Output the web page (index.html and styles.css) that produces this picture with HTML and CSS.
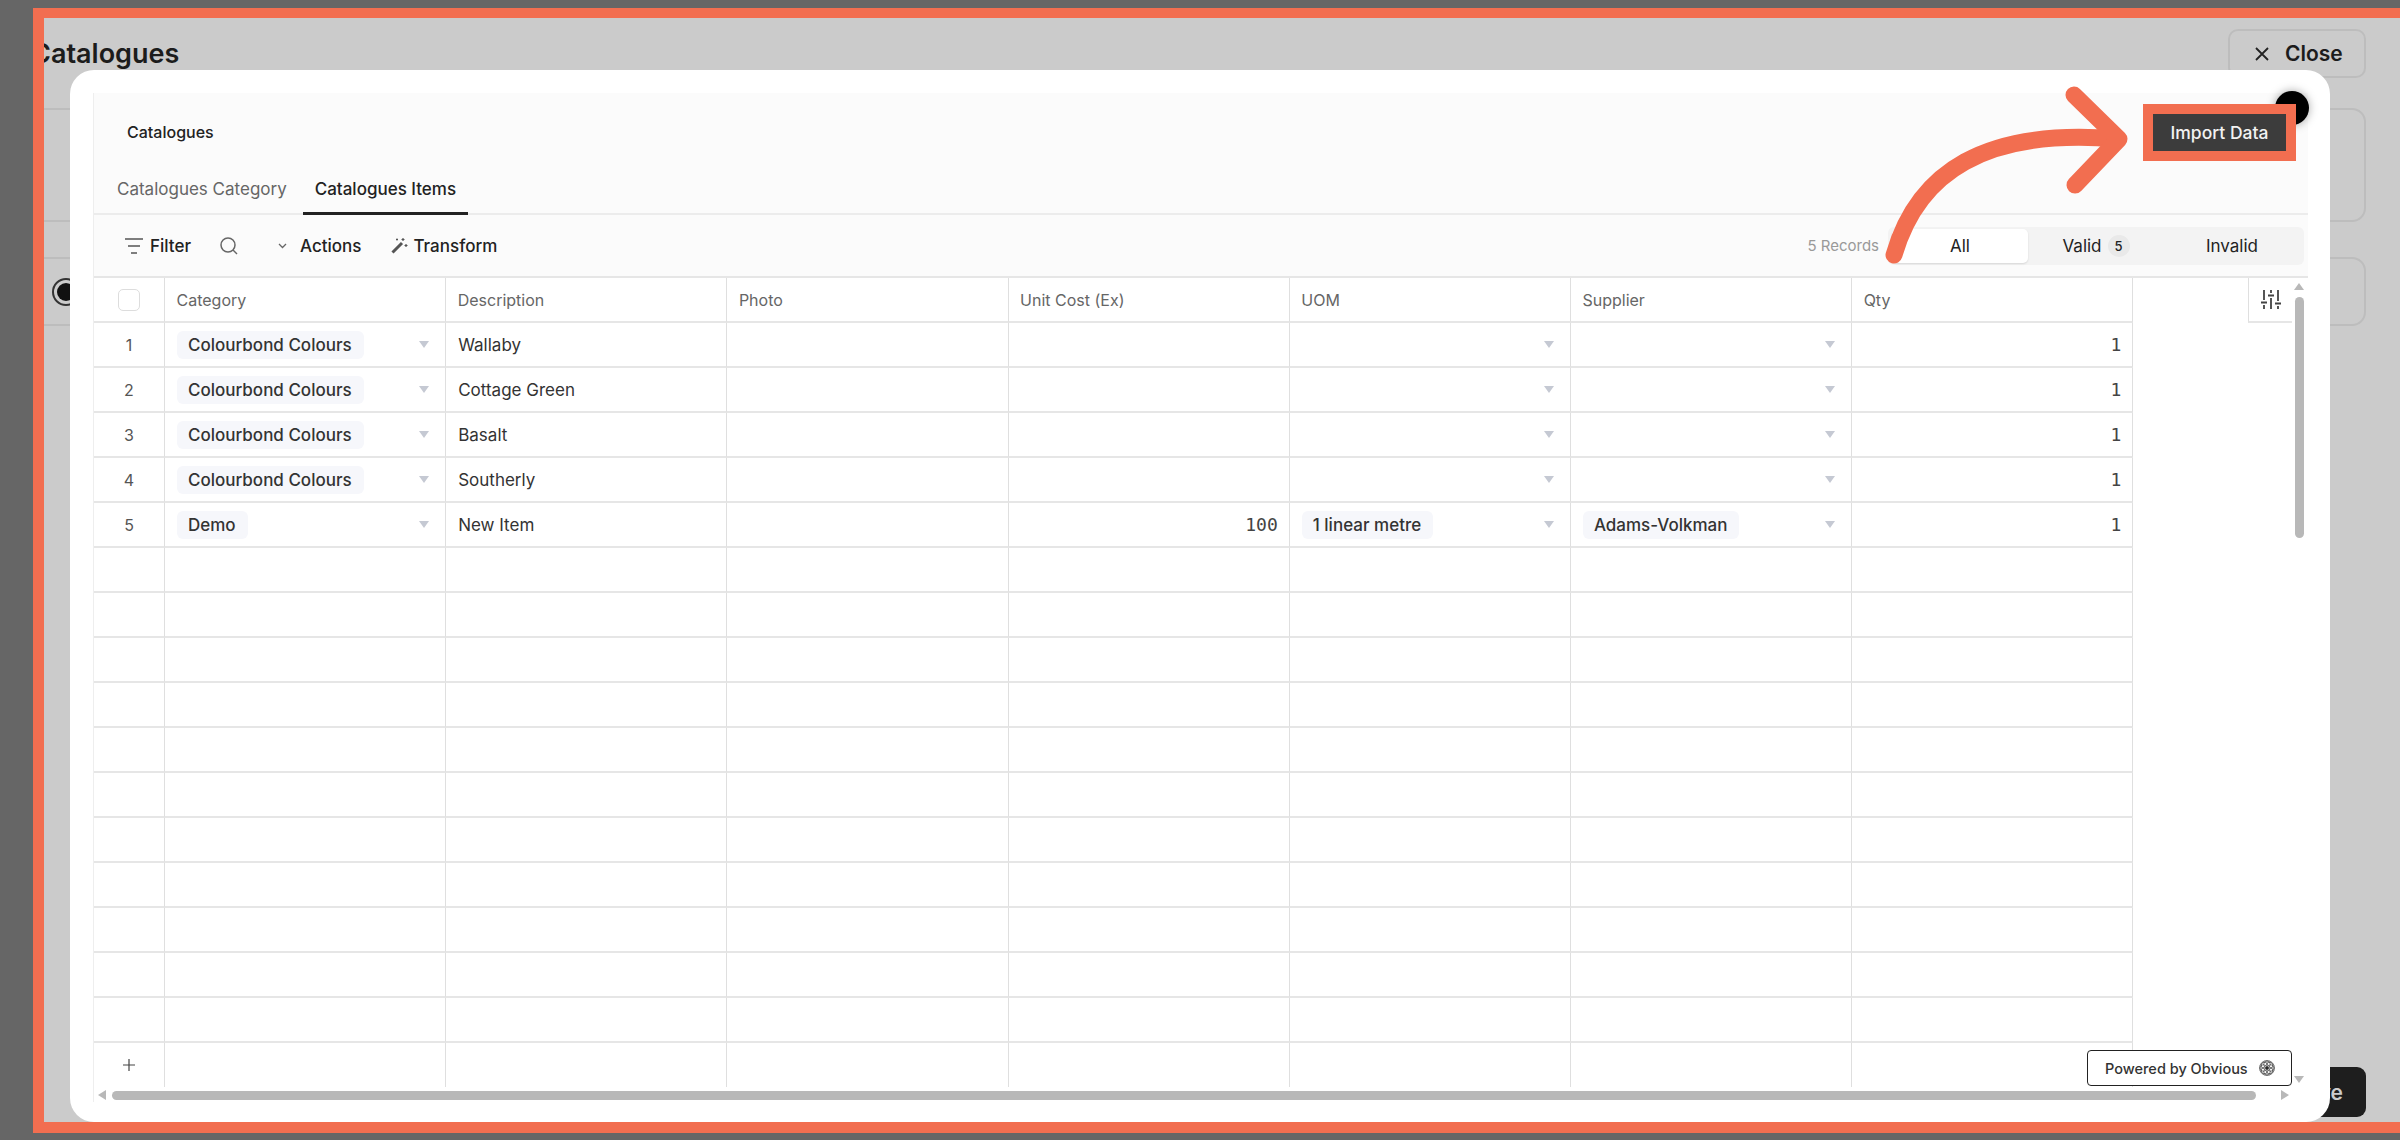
FILE: index.html
```html
<!DOCTYPE html>
<html lang="en">
<head>
<meta charset="utf-8">
<title>Catalogues</title>
<link rel="stylesheet" href="styles.css">
</head>
<body>
<div class="frame">
  <div class="page">
    <header class="page-head">
      <h1 class="page-title">Catalogues</h1>
      <button class="close-btn"><svg class="close-x" viewBox="0 0 14 14"><path d="M1 1l12 12M13 1L1 13"/></svg>Close</button>
    </header>
    <section class="card card-a"></section>
    <section class="card card-b"><span class="radio"></span></section>
    <footer class="page-foot"><button class="save-btn">Save</button></footer>
  </div>

  <div class="modal">
    <span class="modal-close"></span>
    <div class="panel">
      <div class="title-row">
        <span class="sheet-title">Catalogues</span>
        <button class="import-btn">Import Data</button>
      </div>
      <nav class="tabs">
        <span class="tab">Catalogues Category</span>
        <span class="tab tab-on">Catalogues Items</span>
      </nav>
      <div class="toolbar">
        <div class="tools">
          <span class="tool tool-filter"><svg class="ic-filter" viewBox="0 0 18 16"><path d="M0 1h18M3 8h12M6 15h6"/></svg>Filter</span>
          <svg class="ic-search" viewBox="0 0 18 18"><circle cx="8" cy="8" r="7"/><path d="M13 13l4 4"/></svg>
          <span class="tool tool-actions"><svg class="ic-chev" viewBox="0 0 9 6"><path d="M1 1l3.5 3.5L8 1"/></svg>Actions</span>
          <span class="tool tool-transform"><svg class="ic-wand" viewBox="0 0 17 17"><path class="wand-stick" d="M1.5 15.5L11 6"/><path class="wand-spark" d="M12 1v3M10.5 2.500h3M15 7v3M13.500 8.500h3M6 1.500v2M5 2.500h2"/></svg>Transform</span>
        </div>
        <div class="filters">
          <span class="records">5 Records</span>
          <div class="segments">
            <span class="seg seg-on">All</span>
            <span class="seg">Valid<b class="seg-count">5</b></span>
            <span class="seg">Invalid</span>
          </div>
        </div>
      </div>
      <div class="table-area">
        <div class="sheet">
          <div class="c c-num"><span class="check"></span></div><div class="c c-h">Category</div><div class="c c-h">Description</div><div class="c c-h">Photo</div><div class="c c-h">Unit Cost (Ex)</div><div class="c c-h">UOM</div><div class="c c-h">Supplier</div><div class="c c-h">Qty</div>

          <div class="c c-num">1</div><div class="c sel"><span class="chip">Colourbond Colours</span></div><div class="c">Wallaby</div><div class="c"></div><div class="c"></div><div class="c sel"></div><div class="c sel"></div><div class="c c-mono">1</div>
          <div class="c c-num">2</div><div class="c sel"><span class="chip">Colourbond Colours</span></div><div class="c">Cottage Green</div><div class="c"></div><div class="c"></div><div class="c sel"></div><div class="c sel"></div><div class="c c-mono">1</div>
          <div class="c c-num">3</div><div class="c sel"><span class="chip">Colourbond Colours</span></div><div class="c">Basalt</div><div class="c"></div><div class="c"></div><div class="c sel"></div><div class="c sel"></div><div class="c c-mono">1</div>
          <div class="c c-num">4</div><div class="c sel"><span class="chip">Colourbond Colours</span></div><div class="c">Southerly</div><div class="c"></div><div class="c"></div><div class="c sel"></div><div class="c sel"></div><div class="c c-mono">1</div>
          <div class="c c-num">5</div><div class="c sel"><span class="chip">Demo</span></div><div class="c">New Item</div><div class="c"></div><div class="c c-mono">100</div><div class="c sel"><span class="chip">1 linear metre</span></div><div class="c sel"><span class="chip">Adams-Volkman</span></div><div class="c c-mono">1</div>

          <div class="c c-num"></div><div class="c"></div><div class="c"></div><div class="c"></div><div class="c"></div><div class="c"></div><div class="c"></div><div class="c"></div>
          <div class="c c-num"></div><div class="c"></div><div class="c"></div><div class="c"></div><div class="c"></div><div class="c"></div><div class="c"></div><div class="c"></div>
          <div class="c c-num"></div><div class="c"></div><div class="c"></div><div class="c"></div><div class="c"></div><div class="c"></div><div class="c"></div><div class="c"></div>
          <div class="c c-num"></div><div class="c"></div><div class="c"></div><div class="c"></div><div class="c"></div><div class="c"></div><div class="c"></div><div class="c"></div>
          <div class="c c-num"></div><div class="c"></div><div class="c"></div><div class="c"></div><div class="c"></div><div class="c"></div><div class="c"></div><div class="c"></div>
          <div class="c c-num"></div><div class="c"></div><div class="c"></div><div class="c"></div><div class="c"></div><div class="c"></div><div class="c"></div><div class="c"></div>
          <div class="c c-num"></div><div class="c"></div><div class="c"></div><div class="c"></div><div class="c"></div><div class="c"></div><div class="c"></div><div class="c"></div>
          <div class="c c-num"></div><div class="c"></div><div class="c"></div><div class="c"></div><div class="c"></div><div class="c"></div><div class="c"></div><div class="c"></div>
          <div class="c c-num"></div><div class="c"></div><div class="c"></div><div class="c"></div><div class="c"></div><div class="c"></div><div class="c"></div><div class="c"></div>
          <div class="c c-num"></div><div class="c"></div><div class="c"></div><div class="c"></div><div class="c"></div><div class="c"></div><div class="c"></div><div class="c"></div>
          <div class="c c-num"></div><div class="c"></div><div class="c"></div><div class="c"></div><div class="c"></div><div class="c"></div><div class="c"></div><div class="c"></div>

          <div class="c c-num c-last"><svg class="ic-plus" viewBox="0 0 12 12"><path d="M6 0v12M0 6h12"/></svg></div><div class="c c-last"></div><div class="c c-last"></div><div class="c c-last"></div><div class="c c-last"></div><div class="c c-last"></div><div class="c c-last"></div><div class="c c-last"></div>
        </div>
        <aside class="side">
          <div class="settings">
            <svg class="ic-sliders" viewBox="0 0 20 19"><path d="M3 0v10M3 15v4M10 0v3M10 8v11M17 0v11M17 16v3"/><path d="M0 12.500h6M7 5.500h6M14 13.500h6"/></svg>
          </div>
          <div class="vscroll">
            <span class="tri tri-up"></span>
            <span class="vthumb"></span>
            <span class="tri tri-down"></span>
          </div>
        </aside>
      </div>
      <div class="hscroll">
        <span class="tri tri-left"></span>
        <span class="hthumb"></span>
        <span class="tri tri-right"></span>
      </div>
    </div>
    <div class="powered">Powered by Obvious
      <svg class="ic-obvious" viewBox="0 0 16 16"><circle cx="8" cy="8" r="7.500"/><circle cx="8" cy="4.400" r="3.300"/><circle cx="8" cy="11.600" r="3.300"/><circle cx="4.400" cy="8" r="3.300"/><circle cx="11.600" cy="8" r="3.300"/><circle cx="5.500" cy="5.500" r="3.300"/><circle cx="10.500" cy="5.500" r="3.300"/><circle cx="5.500" cy="10.500" r="3.300"/><circle cx="10.500" cy="10.500" r="3.300"/></svg>
    </div>
  </div>

  <svg class="arrow" viewBox="44 18 2356 1104"><path d="M1894 255C1918 172 1985 128 2117 139"/><path d="M2074 95L2119 139L2075 185"/></svg>
</div>
</body>
</html>
```
FILE: styles.css
```css
* { box-sizing: border-box; }
html, body { margin: 0; width: 2400px; height: 1140px; overflow: hidden; background: #666; }
body { font-family: Inter, "Liberation Sans", sans-serif; color: #222; }
button { font: inherit; }

.frame {
  position: relative;
  width: 2367px;
  height: 1125px;
  margin: 8px 0 0 33px;
  border: solid #f26e50;
  border-width: 10px 0 11px 11px;
  background: #cbcbcb;
  overflow: hidden;
}

/* page behind the modal */
.page { display: flex; flex-direction: column; height: 100%; margin-left: -16px; padding: 11px 34px 5px 0; }
.page-head { display: flex; justify-content: space-between; align-items: center; height: 49px; }
.page-title { margin: 0 0 0 3px; font-size: 27px; font-weight: 600; color: #1c1c1c; }
.close-btn {
  display: flex; align-items: center; gap: 16px;
  width: 138px; height: 49px; padding-left: 25px;
  border: 2px solid #bdbdbd; border-radius: 10px; background: transparent;
  font-size: 21px; font-weight: 600; color: #1c1c1c;
}
.close-x { width: 14px; height: 14px; fill: none; stroke: #222; stroke-width: 1.800; }
.card { border: 2px solid #bdbdbd; border-radius: 14px; }
.card-a { height: 114px; margin-top: 30px; }
.card-b { display: flex; align-items: center; height: 69px; margin-top: 35px; padding-left: 22px; }
.radio { display: flex; align-items: center; justify-content: center; width: 28px; height: 28px; border: 2px solid #333; border-radius: 50%; }
.radio::before { content: ""; width: 18px; height: 18px; border-radius: 50%; background: #111; }
.page-foot { display: flex; justify-content: flex-end; margin-top: auto; }
.save-btn { width: 120px; height: 50px; border: 0; border-radius: 9px; background: #1e1e1e; color: #ccc; font-size: 21px; font-weight: 600; padding: 0 23px 0 0; text-align: right; }

/* modal */
.modal {
  position: absolute; left: 26px; top: 52px;
  width: 2260px; height: 1052px;
  padding: 23px 22px 0 23px;
  background: #fff; border-radius: 24px;
}
.modal-close { position: absolute; left: 2205px; top: 21px; width: 34px; height: 34px; border-radius: 50%; background: #000; box-shadow: 0 0 10px rgba(0,0,0,.35); z-index: 1; }
.panel { background: #fbfbfb; border-left: 1px solid #eee; }

.title-row { display: flex; justify-content: space-between; align-items: center; height: 78px; padding: 0 22px 0 33px; }
.sheet-title { font-size: 16px; font-weight: 500; color: #222; }
.import-btn {
  position: relative; z-index: 2;
  width: 133px; height: 37px; margin-top: 1px;
  border: 0; background: #3c3c3c; color: #f2f2f2;
  font-size: 17.500px; font-weight: 500;
  outline: 10px solid #f26e50;
}

.tabs { display: flex; gap: 4px; height: 44px; padding-left: 11px; border-bottom: 2px solid #ececec; }
.tab { height: 42px; padding: 8px 12px 0; font-size: 17px; font-weight: 400; color: #666; }
.tab-on { height: 44px; color: #222; font-weight: 500; border-bottom: 3px solid #222; }

.toolbar { display: flex; justify-content: space-between; align-items: center; height: 63px; padding: 0 4px 0 31px; border-bottom: 2px solid #e6e6e6; }
.tools, .filters { display: flex; align-items: center; }
.tool { display: flex; align-items: center; font-size: 17px; font-weight: 500; color: #222; }
.ic-filter { width: 18px; height: 16px; margin-right: 7px; fill: none; stroke: #555; stroke-width: 1.500; }
.ic-search { width: 18px; height: 18px; margin-left: 29px; fill: none; stroke: #666; stroke-width: 1.500; }
.ic-chev { width: 9px; height: 6px; margin: 0 13px 0 40px; fill: none; stroke: #666; stroke-width: 1.300; }
.ic-wand { width: 17px; height: 17px; margin: 0 5px 0 30px; fill: none; stroke: #555; }
.wand-stick { stroke-width: 3; }
.wand-spark { stroke-width: 1.200; }
.records { margin-right: 9px; font-size: 15px; color: #999; }
.segments { display: grid; grid-template-columns: 136px 1fr 1fr; width: 416px; height: 38px; padding: 2px 4px; background: #f3f3f3; border-radius: 6px; }
.seg { display: flex; align-items: center; justify-content: center; font-size: 17px; font-weight: 400; color: #222; }
.seg-on { background: #fff; border-radius: 5px; box-shadow: 0 1px 2px rgba(0,0,0,.12); }
.seg-count { display: flex; align-items: center; justify-content: center; width: 22px; height: 22px; margin-left: 6px; border-radius: 50%; background: #e9e9e9; font-size: 13px; font-weight: 500; }

/* table */
.table-area { display: flex; background: #fff; }
.sheet { display: grid; grid-template-columns: 71px repeat(7, 281.2px); grid-auto-rows: 45px; flex: none; }
.c {
  display: flex; align-items: center; min-width: 0;
  padding: 0 12px;
  border-right: 1px solid #dfdfdf;
  border-bottom: 2px solid #e6e6e6;
  font-size: 17px; color: #333;
}
.c-h { padding-left: 11.500px; color: #666; font-size: 16px; font-weight: 400; }
.c-num { justify-content: center; padding: 0; color: #555; font-size: 16px; }
.c-mono { justify-content: flex-end; padding-right: 11px; font-family: "DejaVu Sans Mono", monospace; font-size: 18px; color: #444; }
.c-last { border-bottom: 0; height: 44px; }
.check { width: 22px; height: 22px; border: 1px solid #ddd; border-radius: 5px; background: #fff; }
.sel { padding-right: 16px; }
.sel::after { content: ""; margin-left: auto; border: solid transparent; border-width: 7px 5px 0; border-top-color: #c5c9d3; }
.chip { display: flex; align-items: center; height: 28px; padding: 0 12px 0 11px; border-radius: 6px; background: #f6f7fb; font-size: 17px; font-weight: 500; color: #333; }
.ic-plus { width: 12px; height: 12px; fill: none; stroke: #444; stroke-width: 1.200; }

.side { display: flex; flex: 1; padding-left: 115px; }
.settings { display: flex; align-items: center; justify-content: center; width: 44px; height: 45px; border-left: 1px solid #dfdfdf; border-bottom: 2px solid #e6e6e6; }
.ic-sliders { width: 20px; height: 19px; fill: none; stroke: #444; stroke-width: 1.800; }
.vscroll { display: flex; flex-direction: column; align-items: center; flex: 1; padding: 5px 2px 5px 0; }
.vthumb { width: 9px; height: 241px; margin-top: 7px; border-radius: 5px; background: #b8b8b8; }
.tri { flex: none; width: 0; height: 0; border: solid transparent; }
.tri-up { border-width: 0 5px 7px; border-bottom-color: #b8b8b8; }
.tri-down { margin-top: auto; border-width: 7px 5px 0; border-top-color: #b8b8b8; }
.tri-left { border-width: 5px 8px 5px 0; border-right-color: #b8b8b8; }
.tri-right { border-width: 5px 0 5px 8px; border-left-color: #b8b8b8; }

.hscroll { display: flex; align-items: center; height: 14px; padding: 0 0 0 4px; background: #fff; }
.hthumb { width: 2144px; height: 9px; margin: 0 25px 0 6px; border-radius: 5px; background: #b8b8b8; }

.powered {
  position: absolute; left: 2017px; top: 980px;
  display: flex; align-items: center; gap: 11px;
  width: 205px; height: 36px; padding-left: 17px;
  border: 1px solid #222; border-radius: 4px; background: #fff;
  font-size: 14.500px; font-weight: 500; color: #333;
}
.ic-obvious { width: 16px; height: 16px; fill: none; stroke: #222; stroke-width: .6; }

.arrow { position: absolute; left: 0; top: 0; width: 2356px; height: 1104px; z-index: 3; fill: none; stroke: #f26e50; stroke-width: 17; stroke-linecap: round; stroke-linejoin: round; }
```
